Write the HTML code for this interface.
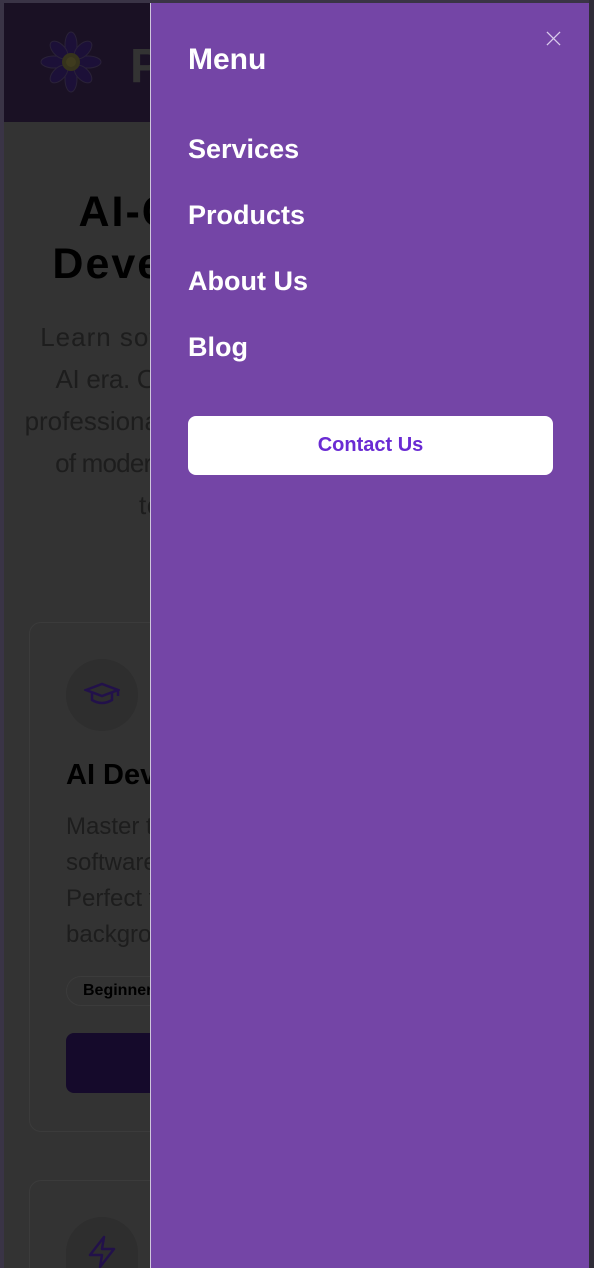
<!DOCTYPE html>
<html><head><meta charset="utf-8"><style>
*{margin:0;padding:0;box-sizing:border-box}
html,body{width:594px;height:1268px;overflow:hidden}
body{background:#333;font-family:"Liberation Sans",Arial,sans-serif}
#w{position:relative;width:594px;height:1268px;overflow:hidden}
.lb{position:absolute;left:0;top:0;width:4px;height:1268px;background:#3a3446}
.tb{position:absolute;left:0;top:0;width:594px;height:3px;background:#3a3446}
.hdr{position:absolute;left:4px;top:3px;width:590px;height:119px;background:#1a1124}
.logo{position:absolute;left:126px;top:36px;font-size:48px;font-weight:bold;color:#333}
h1{position:absolute;left:4px;width:586px;top:186px;text-align:center;font-size:43px;line-height:52px;color:#000;font-weight:bold;letter-spacing:2px;white-space:nowrap}
.p{position:absolute;left:4px;width:586px;top:316px;text-align:center;font-size:26px;line-height:42px;color:#1d1d1d;white-space:nowrap}
.card{position:absolute;left:29px;width:540px;border:1px solid #3b3b3b;border-radius:12px}
.ic{position:absolute;left:36px;width:72px;height:72px;border-radius:50%;background:#2e2e2e}
.ct{position:absolute;left:36px;top:136px;font-size:29px;font-weight:bold;color:#000}
.cp{position:absolute;left:36px;top:186px;font-size:24px;line-height:36px;color:#1d1d1d}
.tag{position:absolute;left:36px;top:353px;border:1px solid #3b3b3b;border-radius:16px;padding:5px 16px;font-size:16px;font-weight:bold;color:#000}
.btn{position:absolute;left:36px;top:410px;width:470px;height:60px;background:#150a2b;border-radius:8px}
.panel{position:absolute;left:150px;top:3px;width:439px;height:1265px;background:#7445a6;border-left:1px solid #cfc6dc}
.rs{position:absolute;left:589px;top:0;width:5px;height:1268px;background:#2f2c38}
.m{position:absolute;left:37px;color:#fff;font-weight:bold}
.cu{position:absolute;left:37px;top:413px;width:365px;height:59px;background:#fff;border-radius:8px;color:#6a2bd3;font-size:20px;font-weight:bold;text-align:center;line-height:59px}
</style></head><body><div id="w">
<div class="lb"></div><div class="tb"></div>
<div class="hdr">
<svg style="position:absolute;left:36px;top:28px" width="62" height="62" viewBox="0 0 62 62">
<g fill="#1c1038" stroke="#2a2238" stroke-width="1">
<ellipse cx="31" cy="14" rx="6" ry="13"/><ellipse cx="31" cy="48" rx="6" ry="13"/>
<ellipse cx="14" cy="31" rx="13" ry="6"/><ellipse cx="48" cy="31" rx="13" ry="6"/>
<ellipse cx="19" cy="19" rx="6" ry="11" transform="rotate(-45 19 19)"/><ellipse cx="43" cy="43" rx="6" ry="11" transform="rotate(-45 43 43)"/>
<ellipse cx="43" cy="19" rx="6" ry="11" transform="rotate(45 43 19)"/><ellipse cx="19" cy="43" rx="6" ry="11" transform="rotate(45 19 43)"/>
</g><circle cx="31" cy="31" r="9" fill="#36331c"/><circle cx="31" cy="31" r="5" fill="#3f3b1e"/></svg>
<div class="logo">Pi</div></div>
<h1>AI-Centric Software<br>Development Training</h1>
<div class="p"><span style="letter-spacing:1px">Learn software development skills for the</span><br><span style="letter-spacing:-0.3px">AI era. Our hands-on courses help aspiring</span><br>professionals master the fundamentals of using<br><span style="letter-spacing:-0.8px">of modern development with the best AI tools</span><br><span style="letter-spacing:0.5px">tools and workflows today.</span></div>
<div class="card" style="top:1180px;height:88px;border-bottom:none;border-radius:12px 12px 0 0">
<div class="ic" style="top:36px;height:52px;border-radius:36px 36px 0 0"></div>
<svg style="position:absolute;left:56px;top:54px" width="32" height="34" viewBox="0 0 32 34" fill="none" stroke="#22114a" stroke-width="2.5" stroke-linejoin="round"><path d="M18 2 L4 20 H16 L14 32 L28 14 H16 Z"/></svg>
</div>
<div class="card" style="top:622px;height:510px">
<div class="ic" style="top:36px"></div>
<svg style="position:absolute;left:54px;top:58px" width="36" height="26" viewBox="0 0 36 26" fill="none" stroke="#22114a" stroke-width="2.5"><path d="M2 9 L18 3 L34 9 L18 15 Z M8 12 V19 Q18 25 28 19 V12 M34 9 V15"/></svg>
<div class="ct">AI Development</div>
<div class="cp">Master the fundamentals of<br>software development with AI.<br>Perfect for those with no<br>background.</div>
<div class="tag">Beginner</div>
<div class="btn"></div></div>
<div class="panel">
<div class="m" style="top:40px;font-size:30px">Menu</div>
<svg style="position:absolute;left:395px;top:28px" width="15" height="15" viewBox="0 0 16 16" stroke="#d9cceb" stroke-width="1.4"><path d="M1 1L15 15M15 1L1 15"/></svg>
<div class="m" style="top:131px;font-size:27px">Services</div>
<div class="m" style="top:197px;font-size:27px">Products</div>
<div class="m" style="top:263px;font-size:27px">About Us</div>
<div class="m" style="top:329px;font-size:27px">Blog</div>
<div class="cu">Contact Us</div>
</div>
<div class="rs"></div>
</div></body></html>
